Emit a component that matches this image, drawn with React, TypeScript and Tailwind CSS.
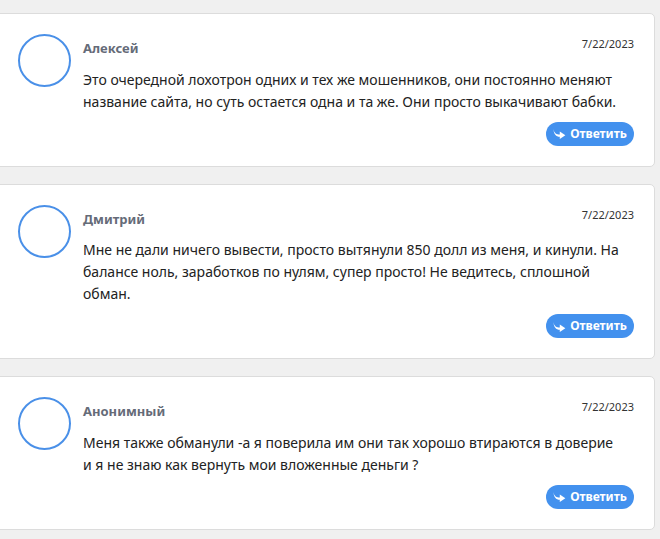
const comments = [
  {
    name: 'Алексей',
    date: '7/22/2023',
    text: 'Это очередной лохотрон одних и тех же мошенников, они постоянно меняют название сайта, но суть остается одна и та же. Они просто выкачивают бабки.',
  },
  {
    name: 'Дмитрий',
    date: '7/22/2023',
    text: 'Мне не дали ничего вывести, просто вытянули 850 долл из меня, и кинули. На балансе ноль, заработков по нулям, супер просто! Не ведитесь, сплошной обман.',
  },
  {
    name: 'Анонимный',
    date: '7/22/2023',
    text: 'Меня также обманули -а я поверила им они так хорошо втираются в доверие и я не знаю как вернуть мои вложенные деньги ?',
  },
]

function ReplyIcon() {
  return (
    <svg viewBox="0 0 14 12" className="h-[11px] w-[13px]" fill="white">
      <path d="M0.3 1 C1.2 5.6 3.8 7.1 7.3 7.1 L7.3 3.8 L13.4 8 L7.3 12 L7.3 9.6 C3.2 9.6 0.8 6.5 0.3 1 Z" />
    </svg>
  )
}

function Comment({ name, date, text }: { name: string; date: string; text: string }) {
  return (
    <div className="ml-[-10px] mr-[5px] rounded-[5px] border border-[#dcdcdc] bg-white pb-[20px] pl-[27px] pr-[20px] pt-[20px]">
      <div className="flex gap-[12px]">
        <div className="h-[53px] w-[53px] shrink-0 rounded-full border-2 border-[#4a90e8]" />
        <div className="min-w-0 flex-1">
          <div className="flex items-start justify-between">
            <div className="pt-[5px] text-[13px] font-bold text-[#656b78]">{name}</div>
            <div className="pt-[2px] text-[11px] text-[#333]">{date}</div>
          </div>
          <p className="mt-[10px] pr-[13px] text-[14px] leading-[22px] text-[#222]">{text}</p>
          <div className="mt-[9px] flex justify-end">
            <button className="flex h-[24px] w-[88px] items-center justify-center gap-[4px] rounded-full bg-[#4391ee] text-[12px] font-bold text-white">
              <ReplyIcon />
              Ответить
            </button>
          </div>
        </div>
      </div>
    </div>
  )
}

export default function App() {
  return (
    <div
      className="flex min-h-[539px] flex-col gap-[17px] overflow-hidden bg-[#f0f0f0] pt-[13px]"
      style={{ fontFamily: '"Noto Sans", "Open Sans", sans-serif' }}
    >
      {comments.map((c) => (
        <Comment key={c.name} {...c} />
      ))}
    </div>
  )
}
